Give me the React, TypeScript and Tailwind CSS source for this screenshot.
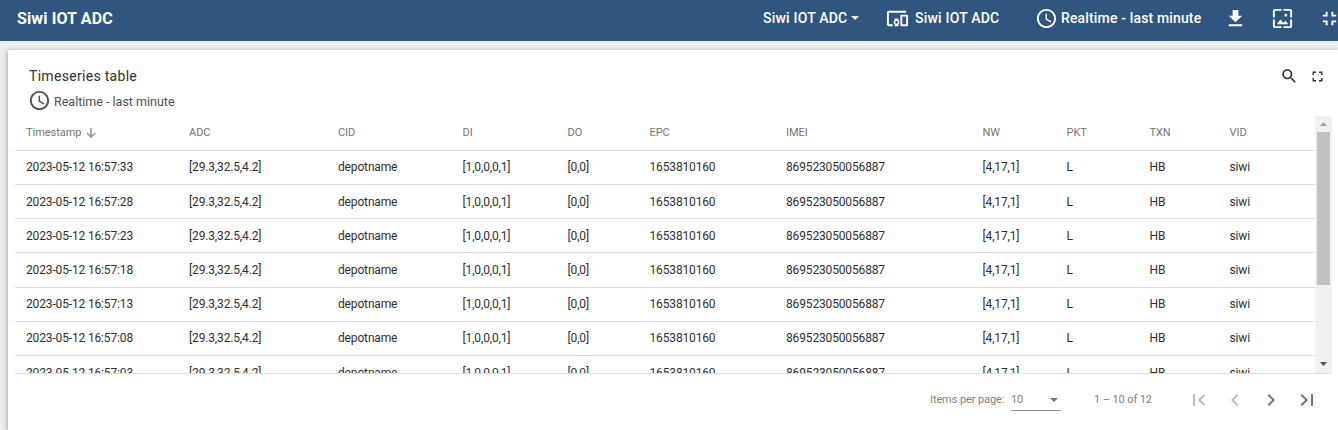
import React from "react";

const PATHS = {
  clock:
    "M11.99 2C6.47 2 2 6.48 2 12s4.47 10 9.99 10C17.52 22 22 17.52 22 12S17.52 2 11.99 2zM12 20c-4.42 0-8-3.58-8-8s3.58-8 8-8 8 3.58 8 8-3.58 8-8 8zM12.5 7H11v6l5.25 3.15.75-1.23-4.5-2.67z",
  devices:
    "M3 6h18V4H3c-1.1 0-2 .9-2 2v12c0 1.1.9 2 2 2h4v-2H3V6zm10 6H9v1.78c-.61.55-1 1.33-1 2.22s.39 1.67 1 2.22V20h4v-1.78c.61-.55 1-1.34 1-2.22s-.39-1.67-1-2.22V12zm-2 5.5c-.83 0-1.5-.67-1.5-1.5s.67-1.5 1.5-1.5 1.5.67 1.5 1.5-.67 1.5-1.5 1.5zM22 8h-6c-.5 0-1 .5-1 1v10c0 .5.5 1 1 1h6c.5 0 1-.5 1-1V9c0-.5-.5-1-1-1zm-1 10h-4v-8h4v8z",
  download: "M19 9h-4V3H9v6H5l7 7 7-7zM5 18v2h14v-2H5z",
  wallpaper:
    "M4 4h7V2H4c-1.1 0-2 .9-2 2v7h2V4zm6 9l-4 5h12l-3-4-2.03 2.71L10 13zm7-4.5c0-.83-.67-1.5-1.5-1.5S14 7.67 14 8.5s.67 1.5 1.5 1.5S17 9.33 17 8.5zM20 2h-7v2h7v7h2V4c0-1.1-.9-2-2-2zm0 18h-7v2h7c1.1 0 2-.9 2-2v-7h-2v7zM4 13H2v7c0 1.1.9 2 2 2h7v-2H4v-7z",
  exitFull:
    "M5 16h3v3h2v-5H5v2zm3-8H5v2h5V5H8v3zm6 11h2v-3h3v-2h-5v5zm2-11V5h-2v5h5V8h-3z",
  full: "M7 14H5v5h5v-2H7v-3zm-2-4h2V7h3V5H5v5zm12 7h-3v2h5v-5h-2v3zM14 5v2h3v3h2V5h-5z",
  search:
    "M15.5 14h-.79l-.28-.27C15.41 12.59 16 11.11 16 9.5 16 5.91 13.09 3 9.5 3S3 5.91 3 9.5 5.91 16 9.5 16c1.61 0 3.09-.59 4.23-1.57l.27.28v.79l5 4.99L20.49 19l-4.99-5zm-6 0C7.01 14 5 11.99 5 9.5S7.01 5 9.5 5 14 7.01 14 9.5 11.99 14 9.5 14z",
  first: "M18.41 16.59L13.82 12l4.59-4.59L17 6l-6 6 6 6zM6 6h2v12H6z",
  prev: "M15.41 7.41L14 6l-6 6 6 6 1.41-1.41L10.83 12z",
  next: "M10 6L8.59 7.41 13.17 12l-4.58 4.59L10 18l6-6z",
  last: "M5.59 7.41L10.18 12l-4.59 4.59L7 18l6-6-6-6zM16 6h2v12h-2z",
};

function Icon({ name, className = "" }: { name: keyof typeof PATHS; className?: string }) {
  return (
    <svg viewBox="0 0 24 24" fill="currentColor" className={`shrink-0 ${className}`}>
      <path d={PATHS[name]} />
    </svg>
  );
}

const COLUMNS = ["Timestamp", "ADC", "CID", "DI", "DO", "EPC", "IMEI", "NW", "PKT", "TXN", "VID"];
const SECONDS = ["33", "28", "23", "18", "13", "08", "03"];
const VALUES = [
  "[29.3,32.5,4.2]",
  "depotname",
  "[1,0,0,0,1]",
  "[0,0]",
  "1653810160",
  "869523050056887",
  "[4,17,1]",
  "L",
  "HB",
  "siwi",
];
const GRID =
  "grid grid-cols-[163px_149px_124.5px_105px_82px_136.5px_196.5px_84px_83px_80px_1fr] items-center pl-[11px] border-b border-[#dedede] whitespace-nowrap";

function TopBar() {
  return (
    <header className="flex h-[41px] shrink-0 items-center bg-[#305680] pb-[5px] pl-[17px] text-[14px] font-medium text-white">
      <h1 className="w-[746px] shrink-0 pt-px text-[16px] font-bold tracking-[0.12px]">Siwi IOT ADC</h1>
      <div className="flex w-[123px] shrink-0 items-center whitespace-nowrap tracking-[0.2px]">
        <span className="w-[88px]">Siwi IOT ADC</span>
        <svg viewBox="0 0 8 4" className="h-1 w-2" fill="currentColor">
          <path d="M0 0h8L4 4z" />
        </svg>
      </div>
      <div className="flex w-[149px] shrink-0 items-center whitespace-nowrap tracking-[0.2px]">
        <Icon name="devices" className="mr-[6px] size-[23px]" />
        <span>Siwi IOT ADC</span>
      </div>
      <div className="flex w-[189px] shrink-0 items-center whitespace-nowrap tracking-[0.15px]">
        <Icon name="clock" className="mr-[3px] size-[23px]" />
        <span>Realtime - last minute</span>
      </div>
      <Icon name="download" className="size-[23px]" />
      <Icon name="wallpaper" className="ml-[24px] size-[23px]" />
      <Icon name="exitFull" className="ml-[24px] size-[23px]" />
    </header>
  );
}

function Table() {
  return (
    <div className="ml-[7px] flex h-[258px] w-[1317px] shrink-0 overflow-hidden border-b border-[#dedede]">
      <div className="w-[1300px] overflow-hidden">
        <div className={`${GRID} h-[35px] text-[11px] tracking-[-0.05px] text-[#757575]`}>
          {COLUMNS.map((c, i) => (
            <span key={c} className="flex items-center">
              {c}
              {i === 0 && (
                <svg viewBox="0 0 10 12" className="ml-[5px] h-3 w-2.5" fill="none" stroke="#999999" strokeWidth="1.6">
                  <path d="M5 1v9M1 6l4 4 4-4" />
                </svg>
              )}
            </span>
          ))}
        </div>
        {SECONDS.map((s) => (
          <div key={s} className={`${GRID} h-[34.15px] text-[12px] tracking-[-0.15px] text-[#303030] last:pt-[2px] nth-2:pb-[2px]`}>
            <span>2023-05-12 16:57:{s}</span>
            {VALUES.map((v) => (
              <span key={v}>{v}</span>
            ))}
          </div>
        ))}
      </div>
      <div className="flex w-[17px] flex-col items-center justify-between bg-[#f1f1f1]">
        <div className="flex flex-col items-center">
          <svg viewBox="0 0 7 4" className="my-[6px] h-1 w-[7px]" fill="#a3a3a3">
            <path d="M0 4h7L3.5 0z" />
          </svg>
          <div className="h-[153px] w-[13px] bg-[#c1c1c1]" />
        </div>
        <svg viewBox="0 0 7 4" className="mb-[7px] h-1 w-[7px]" fill="#505050">
          <path d="M0 0h7L3.5 4z" />
        </svg>
      </div>
    </div>
  );
}

function Pager() {
  return (
    <footer className="flex h-[52px] items-center pl-[922px] text-[11px] tracking-[-0.1px] whitespace-nowrap text-[#808080]">
      <span className="w-[81px]">Items per page:</span>
      <div className="flex h-[22px] w-[50px] items-center justify-between border-b border-[#949494] pr-[3px]">
        <span className="pt-px">10</span>
        <svg viewBox="0 0 8 4" className="h-1 w-2" fill="#757575">
          <path d="M0 0h8L4 4z" />
        </svg>
      </div>
      <span className="ml-[33px] w-[92.5px]">1 – 10 of 12</span>
      <div className="flex gap-3">
        <Icon name="first" className="size-6 text-[#bdbdbd]" />
        <Icon name="prev" className="size-6 text-[#bdbdbd]" />
        <Icon name="next" className="size-6 text-[#757575]" />
        <Icon name="last" className="size-6 text-[#757575]" />
      </div>
    </footer>
  );
}

export default function App() {
  return (
    <div className="flex h-[430px] w-[1338px] flex-col overflow-hidden bg-[#eeeeee] font-['Roboto',sans-serif]">
      <TopBar />
      <main className="mt-[9px] ml-2 flex h-[420px] flex-col bg-white shadow-[0_1px_5px_rgba(0,0,0,0.4)]">
        <div className="flex h-[66px] shrink-0 justify-between pl-[21px] text-[#303030]">
          <div>
            <h2 className="mt-[16px] text-[14px] leading-5 tracking-[0.3px]">Timeseries table</h2>
            <div className="mt-[2px] flex items-center text-[12.5px] text-[#505050]">
              <Icon name="clock" className="-ml-px mr-[3px] size-[23px]" />
              <span className="mt-[4px] leading-5">Realtime - last minute</span>
            </div>
          </div>
          <div className="mt-[17px] mr-[12px] flex h-[18px] items-center gap-[11px]">
            <Icon name="search" className="size-[18.5px]" />
            <Icon name="full" className="size-[17px]" />
          </div>
        </div>
        <Table />
        <Pager />
      </main>
    </div>
  );
}
